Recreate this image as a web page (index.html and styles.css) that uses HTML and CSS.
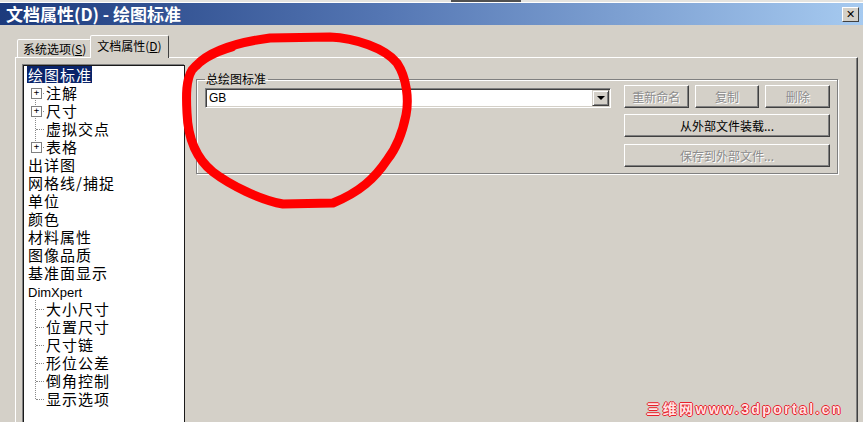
FILE: index.html
```html
<!DOCTYPE html>
<html lang="zh-CN">

<head>
    <meta charset="UTF-8">
    <title>文档属性(D) - 绘图标准</title>
    <link rel="stylesheet" href="styles.css">
</head>

<body>
    <div class="topstrip"><span class="taskbtn"></span></div>
    <div class="titlebar">
        <span class="title">文档属性(D) - 绘图标准</span>
        <span class="close">✕</span>
    </div>

    <div class="dialog">
        <div class="tabs">
            <div class="tab">系统选项(<u>S</u>)</div>
            <div class="tab active">文档属性(<u>D</u>)</div>
        </div>

        <div class="panel">
            <div class="tree">
                <div class="row"><span class="label selected">绘图标准</span></div>
                <ul class="sub first">
                    <li class="plus">注解</li>
                    <li class="plus">尺寸</li>
                    <li>虚拟交点</li>
                    <li class="plus">表格</li>
                </ul>
                <div class="row"><span class="label">出详图</span></div>
                <div class="row"><span class="label">网格线/捕捉</span></div>
                <div class="row"><span class="label">单位</span></div>
                <div class="row"><span class="label">颜色</span></div>
                <div class="row"><span class="label">材料属性</span></div>
                <div class="row"><span class="label">图像品质</span></div>
                <div class="row"><span class="label">基准面显示</span></div>
                <div class="row"><span class="label latin">DimXpert</span></div>
                <ul class="sub">
                    <li>大小尺寸</li>
                    <li>位置尺寸</li>
                    <li>尺寸链</li>
                    <li>形位公差</li>
                    <li>倒角控制</li>
                    <li>显示选项</li>
                </ul>
            </div>

            <fieldset class="group">
                <legend>总绘图标准</legend>
                <div class="group-body">
                    <div class="combo">
                        <span>GB</span>
                        <span class="drop"><i></i></span>
                    </div>
                    <div class="actions">
                        <div class="btnrow">
                            <button disabled>重新命名</button>
                            <button disabled>复制</button>
                            <button disabled>删除</button>
                        </div>
                        <button>从外部文件装载...</button>
                        <button class="last" disabled>保存到外部文件...</button>
                    </div>
                </div>
            </fieldset>
        </div>
    </div>

    <!-- red marker drawn over the screenshot -->
    <svg class="scribble" width="863" height="422" viewBox="0 0 863 422">
        <path d="M 196 66 C 210 50, 240 42, 270 38 L 330 37 C 355 38, 385 48, 397 63 C 407 78, 409 100, 406 115 C 402 135, 395 150, 387 160 C 375 178, 360 192, 333 203 L 283 204 C 260 200, 230 185, 213 172 C 198 160, 188 140, 187 113 C 186 95, 186 80, 192 70 C 200 60, 215 52, 232 47" />
    </svg>

    <div class="watermark">三维网www.3dportal.cn</div>
</body>

</html>
```

FILE: styles.css
```css
* {
    box-sizing: border-box;
    margin: 0;
    padding: 0;
}

body {
    width: 863px;
    height: 422px;
    overflow: hidden;
    position: relative;
    background: #d4d0c8;
    font-family: "Noto Sans CJK SC", "Liberation Sans", sans-serif;
    font-size: 12px;
    color: #000;
}

.topstrip {
    height: 3px;
    background: #e4e3df;
    border-bottom: 1px solid #fff;
    display: flex;
}

.taskbtn {
    margin-left: 451px;
    width: 70px;
    height: 2px;
    background: #505050;
}

.titlebar {
    height: 22px;
    display: flex;
    align-items: center;
    justify-content: space-between;
    padding: 0 4px 0 6px;
    background: linear-gradient(to right, #1c3a7c, #5577b4 45%, #a6caf0);
}

.title {
    color: #fff;
    font-weight: bold;
    font-size: 17px;
    line-height: 22px;
}

.close {
    width: 17px;
    height: 15px;
    background: #d4d0c8;
    border: 1px solid;
    border-color: #fff #404040 #404040 #fff;
    font-size: 11px;
    font-weight: bold;
    line-height: 13px;
    text-align: center;
    font-family: "DejaVu Sans", sans-serif;
}

.dialog {
    padding: 10px 5px 0 15px;
}

.tabs {
    display: flex;
    align-items: flex-end;
    height: 22px;
    padding-left: 2px;
    position: relative;
    z-index: 1;
}

.tab {
    height: 18px;
    line-height: 17px;
    padding: 0 4px 0 5px;
    border: 1px solid;
    border-bottom: none;
    border-color: #fff #404040 transparent #fff;
    border-radius: 2px 2px 0 0;
    background: #d4d0c8;
}

.tab.active {
    height: 23px;
    margin-bottom: -1px;
    line-height: 20px;
    padding: 0 6px 0 6px;
    margin-left: -1px;
}

.tab u {
    text-decoration: underline;
}

.panel {
    display: flex;
    align-items: flex-start;
    gap: 11px;
    height: 380px;
    padding: 7px 0 0 7px;
    border-top: 1px solid #fff;
    border-left: 1px solid #fff;
    border-right: 1px solid #404040;
    box-shadow: inset -1px 0 0 #808080;
}

/* tree */

.tree {
    width: 162px;
    height: 370px;
    flex: none;
    background: #fff;
    border: 1px solid #1a1a1a;
    box-shadow: -1px -1px 0 #808080;
    padding: 0 0 0 3px;
    font-size: 15px;
    letter-spacing: 1px;
    line-height: 18px;
}

.row {
    height: 18px;
}

.label {
    display: inline-block;
    height: 17px;
    padding: 0 0 0 1px;
    line-height: 17px;
}

.label.selected {
    background: #0a246a;
    color: #fff;
}

.label.latin {
    font-family: "Liberation Sans", sans-serif;
    font-size: 13px;
    letter-spacing: 0;
    padding-top: 1px;
}

.sub {
    list-style: none;
    position: relative;
}

.sub::before {
    content: "";
    position: absolute;
    left: 8px;
    top: 0;
    bottom: 9px;
    border-left: 1px dotted #8a8a8a;
}

.sub.first::before {
    top: 9px;
}

.sub li {
    position: relative;
    height: 18px;
    padding-left: 19px;
}

.sub li::before {
    content: "";
    position: absolute;
    left: 9px;
    top: 9px;
    width: 8px;
    border-top: 1px dotted #8a8a8a;
}

.sub li.plus::after {
    content: "+";
    position: absolute;
    left: 4px;
    top: 4px;
    width: 9px;
    height: 9px;
    background: #fff;
    border: 1px solid #808080;
    font-family: "DejaVu Sans Mono", monospace;
    font-size: 9px;
    letter-spacing: 0;
    line-height: 7px;
    text-align: center;
}

/* group box */

.group {
    width: 642px;
    flex: none;
    margin-top: 8px;
    padding: 0 7px 6px 8px;
    border: 1px solid #808080;
    box-shadow: inset 1px 1px 0 #fff, 1px 1px 0 #fff;
}

.group legend {
    padding: 0 2px 0 1px;
    font-size: 12px;
    line-height: 12px;
}

.group-body {
    display: flex;
    align-items: flex-start;
    gap: 13px;
}

.combo {
    width: 406px;
    height: 20px;
    margin-top: 3px;
    display: flex;
    align-items: center;
    justify-content: space-between;
    background: #fff;
    border: 1px solid;
    border-color: #808080 #fff #fff #808080;
    box-shadow: inset 1px 1px 0 #404040, inset -1px -1px 0 #d4d0c8;
    padding: 0 1px 0 3px;
    font-family: "Liberation Sans", sans-serif;
    font-size: 12px;
}

.drop {
    width: 17px;
    height: 16px;
    display: flex;
    align-items: center;
    justify-content: center;
    background: #d4d0c8;
    border: 1px solid;
    border-color: #d4d0c8 #404040 #404040 #d4d0c8;
    box-shadow: inset 1px 1px 0 #fff, inset -1px -1px 0 #808080;
}

.drop i {
    width: 0;
    height: 0;
    border-left: 4px solid transparent;
    border-right: 4px solid transparent;
    border-top: 4px solid #000;
}

.actions {
    width: 206px;
    display: flex;
    flex-direction: column;
    gap: 6px;
}

.btnrow {
    display: flex;
    gap: 6px;
}

.btnrow button {
    flex: 1;
}

button {
    height: 23px;
    background: #d4d0c8;
    border: 1px solid;
    border-color: #fff #404040 #404040 #fff;
    box-shadow: inset -1px -1px 0 #808080;
    font-family: "Noto Sans CJK SC", sans-serif;
    font-size: 12px;
    color: #000;
}

button:disabled {
    color: #8c8c8c;
    text-shadow: 1px 1px 0 #fff;
}

button.last {
    margin-top: 1px;
}

/* overlays */

.scribble {
    position: absolute;
    top: 0;
    left: 0;
    pointer-events: none;
}

.scribble path {
    fill: none;
    stroke: #f00;
    stroke-width: 9;
    stroke-linecap: round;
    stroke-linejoin: round;
}

.watermark {
    position: absolute;
    right: 20px;
    bottom: 5px;
    font-family: "Liberation Sans", "Noto Sans CJK SC", sans-serif;
    font-size: 14px;
    font-weight: bold;
    letter-spacing: 2.4px;
    line-height: 16px;
    color: #ffe6e6;
    text-shadow: 1px 0 0 #e8202a, -1px 0 0 #e8202a, 0 1px 0 #e8202a, 0 -1px 0 #e8202a;
}
```
